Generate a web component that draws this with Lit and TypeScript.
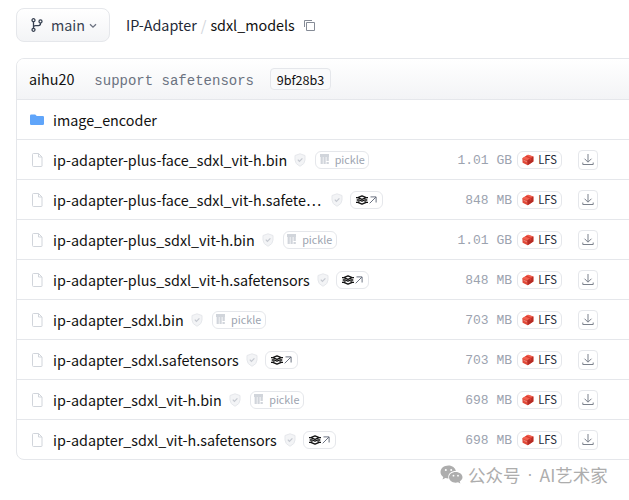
import { LitElement, html, css, svg } from 'lit';

interface FileEntry {
  name: string;
  size: string;
  badge: 'pickle' | 'safetensors';
}

const FILES: FileEntry[] = [
  { name: 'ip-adapter-plus-face_sdxl_vit-h.bin', size: '1.01 GB', badge: 'pickle' },
  { name: 'ip-adapter-plus-face_sdxl_vit-h.safete…', size: '848 MB', badge: 'safetensors' },
  { name: 'ip-adapter-plus_sdxl_vit-h.bin', size: '1.01 GB', badge: 'pickle' },
  { name: 'ip-adapter-plus_sdxl_vit-h.safetensors', size: '848 MB', badge: 'safetensors' },
  { name: 'ip-adapter_sdxl.bin', size: '703 MB', badge: 'pickle' },
  { name: 'ip-adapter_sdxl.safetensors', size: '703 MB', badge: 'safetensors' },
  { name: 'ip-adapter_sdxl_vit-h.bin', size: '698 MB', badge: 'pickle' },
  { name: 'ip-adapter_sdxl_vit-h.safetensors', size: '698 MB', badge: 'safetensors' },
];

const icon = (width: number, height: number, viewBox: string, body: unknown) => html`
  <svg width=${width} height=${height} viewBox=${viewBox} fill="none">${body}</svg>
`;

const branchIcon = icon(12, 14, '0 0 12 14', svg`
  <g stroke="#374151" stroke-width="1.3">
    <circle cx="2.5" cy="2.2" r="1.5" />
    <circle cx="2.5" cy="11.8" r="1.5" />
    <circle cx="9.5" cy="3.4" r="1.5" />
    <path d="M2.5 3.8v6.4M9.5 5v.6q0 2-2 2h-3q-2 0-2 2" />
  </g>
`);

const chevronIcon = icon(8, 6, '0 0 8 6', svg`
  <path d="M1 1.2l3 3 3-3" stroke="#6b7280" stroke-width="1.3" />
`);

const copyIcon = icon(12, 12, '0 0 12 12', svg`
  <path d="M3.5 3.5h8v8h-8zM1.5 8V1.5H9" stroke="#858b96" stroke-width="1" />
`);

const folderIcon = icon(14, 12, '0 0 14 12', svg`
  <path d="M1.2 .5h4l1.6 1.4h6q1.2 0 1.2 1.2v6.7q0 1.2-1.2 1.2H1.2Q0 11 0 9.8V1.7Q0 .5 1.2 .5z" fill="#60a5fa" />
`);

const fileIcon = icon(11, 14, '0 0 11 14', svg`
  <path d="M1.5 .5h5l3.5 3.5v9q0 .5-.5 .5h-8q-1 0-1-1v-11q0-1 1-1zM6.5 .5v3.5h3.5" stroke="#d1d5db" />
`);

const shieldIcon = icon(12, 14, '0 0 12 14', svg`
  <path d="M6 .8l5 1.7v4.5q0 4-5 6.3q-5-2.3-5-6.3V2.5z" fill="#f3f4f6" stroke="#e5e7eb" />
  <path d="M3.8 6.7l1.6 1.6 3-3" stroke="#c5c9d0" stroke-width="1.2" />
`);

const pickleIcon = icon(10, 11, '0 0 10 11', svg`
  <g fill="#d1d5db">
    <path d="M0 0h9v3h-9z" />
    <path d="M.6 3h2.2v7h-2.2zM3.500 3h2.200v7h-2.200zM6.500 3h2.300v4h-2.300zM6.500 8h2.300v2h-2.300z" />
  </g>
`);

const stackIcon = icon(12, 10, '0 0 12 10', svg`
  <g stroke="#111" stroke-width="1.3" stroke-linejoin="round">
    <path d="M6 .9L10.2 2.6 6 4.3 1.8 2.6z" />
    <path d="M0 2.6h1.8M10.2 2.6H12" />
    <path d="M.7 5h2.6L6 6.1 8.7 5h2.6" />
    <path d="M0 7.3h1.8L6 9.2l4.2-1.9H12" />
    <path d="M1.8 7.3L3.5 6.5M10.2 7.3L8.5 6.5" />
  </g>
`);

const arrowIcon = icon(8, 8, '0 0 8 8', svg`
  <path d="M.7 7.3L7 1M1.5 .9H7.1V6.5" stroke="#6b7280" stroke-width="1" />
`);

const boxIcon = icon(12, 12, '0 0 12 12', svg`
  <path d="M.3 4.2L6 .8l5.4 1.8v5L5.7 11.3 .6 8.8z" fill="#e04a3a" />
  <path d="M.3 4.2L6 .8l5.4 1.8L5.4 6.2z" fill="#f2604f" />
  <path d="M5.4 6.2l6-3.600v5L5.7 11.3z" fill="#b52c25" />
  <path d="M3.2 2.5l4.600 2v2.400l1.500-.9V3.700L4.600 1.700" fill="#d83a30" />
  <path d="M1.500 6.200L5 7.900" stroke="#f9b0a6" stroke-width=".6" />
`);

const downloadIcon = icon(12, 12, '0 0 12 12', svg`
  <path d="M6 0v8M2.500 4.700L6 8.200l3.500-3.500M.8 8.500v2h10.400V8.500" stroke="#7b818c" />
`);

const chatIcon = icon(23, 19, '0 0 23 19', svg`
  <path d="M8.5 .5C4 .5 .5 3.3 .5 7c0 2 1 3.8 2.8 5l-.8 2.5 2.9-1.5q1.6 .5 3.1 .4a6 6 0 0 1-.2-1.5c0-3.3 3.2-5.9 7.6-5.8C15.3 2.8 12.3 .5 8.5 .5z" fill="#adadad" />
  <path d="M15.7 6.9c-3.8 0-6.7 2.4-6.7 5.4s2.9 5.4 6.7 5.4q1.2 0 2.3-.4l2.4 1.3-.7-2.1c1.7-1 2.8-2.5 2.8-4.2 0-3-3-5.4-6.8-5.4z" fill="#adadad" />
  <g fill="#fff">
    <circle cx="5.8" cy="5" r="1" />
    <circle cx="11.2" cy="5" r="1" />
    <circle cx="13.5" cy="10.7" r=".9" />
    <circle cx="18" cy="10.7" r=".9" />
  </g>
`);

export class AppRoot extends LitElement {

  static get styles() {
    return css`
      :host {
        display: block;
        position: relative;
        box-sizing: border-box;
        width: 629px;
        height: 500px;
        padding: 8px 0 0 16px;
        overflow: hidden;
        background: white;
        color: #111;
        font-family: "Noto Sans CJK SC", sans-serif;
        font-size: 14.35px;
      }

      * {
        box-sizing: border-box;
      }

      svg {
        display: block;
        flex: none;
      }

      .toolbar {
        display: flex;
        align-items: center;
        height: 34px;
        margin-bottom: 16px;
        white-space: nowrap;
      }

      .branch {
        display: flex;
        align-items: center;
        width: 94px;
        height: 34px;
        padding-left: 14px;
        border: 1px solid #e5e7eb;
        border-radius: 8px;
        background: linear-gradient(#fff, #f3f4f6);
        color: #374151;
      }

      .branch-name {
        margin: 0 4px 0 8px;
        padding-bottom: 2px;
      }

      .branch-name + svg {
        margin-top: 2px;
      }

      .path {
        display: flex;
        align-items: center;
        margin-left: 16px;
      }

      .path span {
        padding-bottom: 2px;
      }

      .repo {
        color: #1f2937;
      }

      .slash {
        margin: 0 4px;
        color: #d1d5db;
      }

      .folder {
        margin-right: 8px;
      }

      .list {
        width: 640px;
        border: 1px solid #e5e7eb;
        border-radius: 8px;
        overflow: hidden;
      }

      .commit {
        display: flex;
        align-items: center;
        height: 40px;
        padding-left: 12px;
        background: linear-gradient(#fff, #f3f4f6);
      }

      .author {
        padding-bottom: 2px;
      }

      .message {
        margin: 0 16px 0 20px;
        padding-top: 3px;
        color: #6b7280;
        font: 14px "Liberation Mono", monospace;
      }

      .hash {
        display: flex;
        align-items: center;
        justify-content: center;
        width: 61px;
        height: 22px;
        border: 1px solid #e5e7eb;
        border-radius: 4px;
        background: #f9fafb;
        font-size: 12.6px;
      }

      .row {
        display: grid;
        grid-template-columns: 398px 85px 5px 45px 16px 20px;
        align-items: center;
        height: 40px;
        padding-left: 12px;
        border-top: 1px solid #e5e7eb;
      }

      .name-cell {
        display: flex;
        align-items: center;
        white-space: nowrap;
      }

      .kind {
        width: 24px;
        padding-left: 1px;
      }

      .kind.file {
        padding-left: 3px;
      }

      .shield {
        margin: 0 9px 0 7px;
      }

      .truncated {
        margin-left: 10px;
      }

      .badge {
        display: flex;
        align-items: center;
        justify-content: center;
        height: 18px;
        border: 1px solid #e5e7eb;
        border-radius: 6px;
      }

      .pickle {
        gap: 5px;
        width: 54px;
        color: #9ca3af;
        font-size: 10.8px;
      }

      .pickle span {
        padding-bottom: 1px;
      }

      .safetensors {
        gap: 1px;
        width: 33px;
        margin-left: -2px;
      }

      .size {
        padding-top: 2px;
        color: #9ca3af;
        font: 13px "Liberation Mono", monospace;
        text-align: right;
      }

      .lfs {
        grid-column: 4;
        gap: 4px;
        color: #1f2937;
        font-size: 11.2px;
      }

      .lfs span {
        padding-bottom: 1px;
      }

      .download {
        display: grid;
        grid-column: 6;
        place-items: center;
        height: 20px;
        border: 1px solid #e5e7eb;
        border-radius: 4px;
      }

      .watermark {
        position: absolute;
        left: 440px;
        top: 463px;
        display: flex;
        align-items: center;
        height: 22px;
        color: #adadad;
        font-size: 17.5px;
        white-space: nowrap;
      }

      .watermark svg {
        margin-right: 5px;
      }

      .dot {
        width: 19px;
        font-family: "Liberation Sans", sans-serif;
        text-align: center;
      }
    `;
  }

  renderBadge(kind: FileEntry['badge']) {
    return kind === 'pickle'
      ? html`<span class="badge pickle">${pickleIcon}<span>pickle</span></span>`
      : html`<span class="badge safetensors">${stackIcon}${arrowIcon}</span>`;
  }

  renderFile(file: FileEntry) {
    return html`
      <div class="row">
        <div class="name-cell">
          <span class="kind file">${fileIcon}</span>
          <span class="name">${file.name}</span>
          <span class="shield ${file.name.endsWith('…') ? 'truncated' : ''}">${shieldIcon}</span>
          ${this.renderBadge(file.badge)}
        </div>
        <span class="size">${file.size}</span>
        <span class="badge lfs">${boxIcon}<span>LFS</span></span>
        <span class="download">${downloadIcon}</span>
      </div>
    `;
  }

  render() {
    return html`
      <div class="toolbar">
        <div class="branch">
          ${branchIcon}<span class="branch-name">main</span>${chevronIcon}
        </div>
        <div class="path">
          <span class="repo">IP-Adapter</span>
          <span class="slash">/</span>
          <span class="folder">sdxl_models</span>
          ${copyIcon}
        </div>
      </div>
      <div class="list">
        <div class="commit">
          <span class="author">aihu20</span>
          <span class="message">support safetensors</span>
          <span class="hash">9bf28b3</span>
        </div>
        <div class="row">
          <div class="name-cell">
            <span class="kind">${folderIcon}</span>
            <span class="name">image_encoder</span>
          </div>
        </div>
        ${FILES.map((file) => this.renderFile(file))}
      </div>
      <div class="watermark">
        ${chatIcon}<span>公众号</span><span class="dot">·</span><span>AI艺术家</span>
      </div>
    `;
  }
}

globalThis.customElements.define('app-root', AppRoot);
